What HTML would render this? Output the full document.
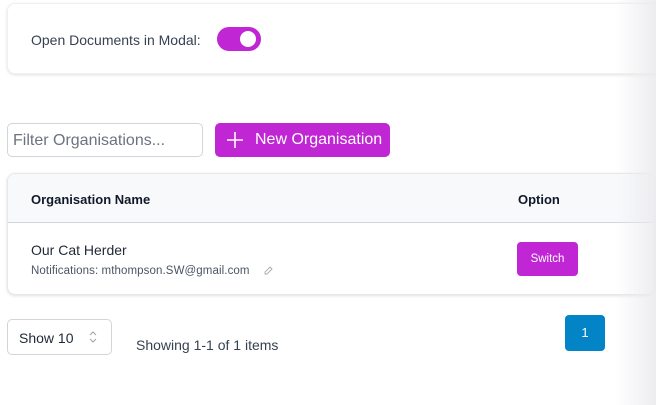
<!DOCTYPE html>
<html><head><style>
*{box-sizing:border-box;margin:0;padding:0}
body{width:656px;height:405px;background:#fff;font-family:"Liberation Sans",sans-serif;position:relative;overflow:hidden;color:#1f2937}
.a{position:absolute}
.card{border-radius:8px;box-shadow:0 1px 3px rgba(0,0,0,.12);background:#fff}
.fade{position:absolute;right:0;top:0;width:40px;height:405px;background:linear-gradient(to right,rgba(240,240,242,0),rgba(235,235,238,.9));pointer-events:none}
</style></head><body>
<div class="a card" style="left:7px;top:3px;width:660px;height:71px;border:1px solid #f0f0f2"></div>
<div class="a" style="left:31px;top:32px;font-size:14px;color:#374151">Open Documents in Modal:</div>
<div class="a" style="left:217px;top:27px;width:44px;height:24px;border-radius:12px;background:#c026d3"></div>
<div class="a" style="left:240px;top:31px;width:16px;height:16px;border-radius:8px;background:#fff"></div>

<div class="a" style="left:7px;top:123px;width:196px;height:34px;border:1px solid #d1d5db;border-radius:5px;font-size:16px;color:#6b7280;padding:8px 0 0 5px">Filter Organisations...</div>
<div class="a" style="left:215px;top:123px;width:175px;height:34px;background:#c026d3;border-radius:5px;color:#fff;font-size:16px">
<svg class="a" style="left:11px;top:8px" width="18" height="18" viewBox="0 0 18 18"><path d="M9 1v16M1 9h16" stroke="#fff" stroke-width="1.6"/></svg>
<span class="a" style="left:40px;top:8px">New Organisation</span></div>

<div class="a card" style="left:7px;top:173px;width:648px;height:122px;border:1px solid #e5e7eb;overflow:hidden">
<div class="a" style="left:0;top:0;width:100%;height:49px;background:#f8f9fb;border-bottom:1px solid #d1d5db"></div>
<div class="a" style="left:23px;top:18px;font-size:13px;font-weight:bold;color:#111827">Organisation Name</div>
<div class="a" style="left:510px;top:18px;font-size:13px;font-weight:bold;color:#111827">Option</div>
<div class="a" style="left:23px;top:68px;font-size:14px;color:#1f2937">Our Cat Herder</div>
<div class="a" style="left:23px;top:91px;font-size:11.5px;color:#4b5563;letter-spacing:.1px">Notifications: mthompson.SW@gmail.com</div>
<svg class="a" style="left:256px;top:91px" width="10" height="10" viewBox="0 0 10 10"><path d="M1 9h2l5-5-2-2-5 5z M6 2l2 2" fill="none" stroke="#aaa" stroke-width=".9"/></svg>
<div class="a" style="left:509px;top:68px;width:61px;height:34px;background:#c026d3;border-radius:4px;color:#fff;font-size:11.5px;text-align:center;line-height:34px">Switch</div>
</div>

<div class="a" style="left:7px;top:319px;width:105px;height:36px;border:1px solid #d1d5db;border-radius:5px;font-size:14px;padding:10px 0 0 11px">Show 10</div>
<svg class="a" style="left:88px;top:329px" width="10" height="16" viewBox="0 0 10 16"><path d="M2 6l3-3 3 3M2 10l3 3 3-3" fill="none" stroke="#9ca3af" stroke-width="1"/></svg>
<div class="a" style="left:136px;top:337px;font-size:14px;color:#374151">Showing 1-1 of 1 items</div>
<div class="a" style="left:565px;top:315px;width:40px;height:36px;background:#0284c7;border-radius:4px;color:#fff;font-size:13px;text-align:center;line-height:36px">1</div>
<div class="fade"></div>
</body></html>
